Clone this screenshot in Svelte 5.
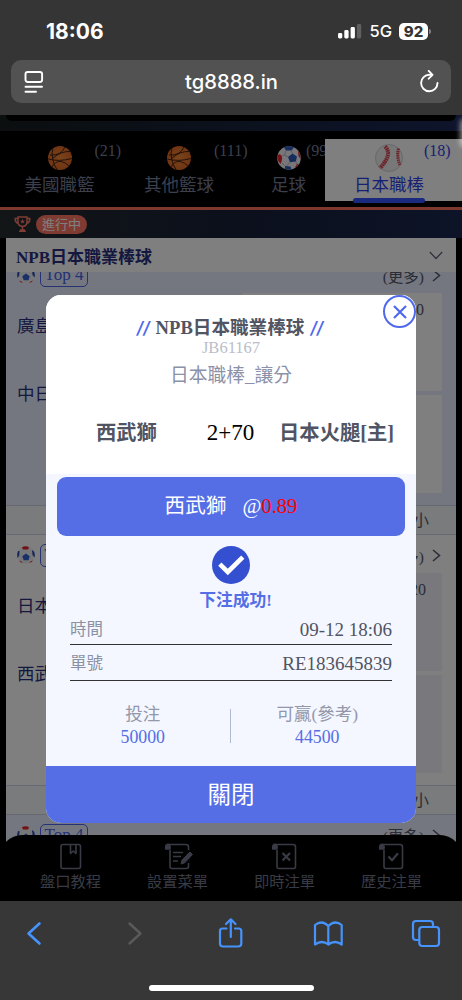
<script>
	let tabs = [
		{name: '美國職籃', count: 21, icon: 'basketball'},
		{name: '其他籃球', count: 111, icon: 'basketball'},
		{name: '足球', count: 99, icon: 'soccer'},
		{name: '日本職棒', count: 18, icon: 'baseball', active: true},
	];
	let matches = [
		{home: '廣島鯉魚', away: '中日龍', odds: '20'},
		{home: '日本火腿', away: '西武獅', odds: '20', plain: true},
		{home: '', away: '', odds: ''},
	];
	let menu = [
		{name: '盤口教程', icon: 'book'},
		{name: '設置菜單', icon: 'edit'},
		{name: '即時注單', icon: 'cross'},
		{name: '歷史注單', icon: 'check'},
	];
	let bet = [
		{label: '時間', value: '09-12 18:06'},
		{label: '單號', value: 'RE183645839'},
	];
</script>

{#snippet soccer()}
	<svg class="ball" viewBox="0 0 24 24">
		<circle cx="12" cy="12" r="11.8" fill="#f0f0f4"/>
		<path d="M7 1.5 Q12 -1 17 1.5 L14.5 4.5 L9 4.5Z" fill="#2e5bbd"/>
		<path d="M0.5 9 Q4 7 5 11 Q5.5 15 3.5 18 Q-.5 14 .5 9Z" fill="#e8202c"/>
		<path d="M11 11 L15.5 7.5 L20 10.5 L18.8 15.5 L13 16.3Z" fill="#2e5bbd"/>
		<path d="M8 20 L13.5 20.5 L14.5 23.5 Q11 24.5 8 22.8Z" fill="#2e5bbd"/>
		<path d="M21 4.5 Q24 9 23.5 13 L21.5 10Z M20 18 L21.8 18 Q20 21 17.5 22.3Z" fill="#e8202c"/>
		<path d="M9 4.5 L7.5 9 L11 11 M7.5 9 L5 10 M14.5 4.5 L15.5 7.5 M13 16.3 L9.5 20 M5 17 L8 20 M18.8 15.5 L20 18" stroke="#a0a0aa" stroke-width=".7" fill="none"/>
	</svg>
{/snippet}

{#snippet smallBall()}
	<svg class="small-ball" viewBox="0 0 18 18">
		<circle cx="9" cy="9" r="8.8" fill="#eceef2"/>
		<path d="M5 1.2 Q8 -.5 12 1 L11 3.5 L6 3.5Z" fill="#e8202c"/>
		<path d="M1 5 L2.5 5 L2.3 9.5 L.5 12 Q-.3 8 1 5Z M17 5.5 L15 4 L15.5 9 L17.5 11.5 Q18.3 8 17 5.5Z" fill="#2e4dae"/>
		<path d="M9 7.5 L12.7 10.3 L11.5 14.3 L6.7 14.3 L5.2 10.3Z" fill="#3460d2"/>
		<path d="M2 14.5 Q3.5 16.5 5.7 17 L4.5 15.5Z M16 14.5 Q14.5 16.5 12.3 17 L13.5 15.5Z" fill="#e8202c"/>
	</svg>
{/snippet}

<div class="phone">
	<header class="browser-top">
		<div class="status">
			<span class="clock">18:06</span>
			<div class="status-right">
				<svg width="24" height="16" viewBox="0 0 24 16">
					<rect x="0" y="10" width="4.3" height="5.5" rx="1.4" fill="#fff"/>
					<rect x="6.3" y="7" width="4.3" height="8.5" rx="1.4" fill="#fff"/>
					<rect x="12.6" y="4" width="4.3" height="11.5" rx="1.4" fill="#fff"/>
					<rect x="18.9" y="1" width="4.3" height="14.5" rx="1.4" fill="#606060"/>
				</svg>
				<span class="network">5G</span>
				<span class="battery">92</span>
			</div>
		</div>
		<div class="address">
			<svg width="20" height="24" viewBox="0 0 20 24" fill="none" stroke="#fff" stroke-width="1.9" stroke-linecap="round">
				<rect x="1.5" y="2" width="16.6" height="10" rx="2.2"/>
				<path d="M1.5 16.8H18M1.5 21.8H12"/>
			</svg>
			<span>tg8888.in</span>
			<svg width="20" height="24" viewBox="0 0 20 24" fill="none" stroke="#fff" stroke-width="1.9" stroke-linecap="round" stroke-linejoin="round">
				<path d="M12.5 4.8 H10.5 A8.2 8.2 0 1 0 18.5 13"/>
				<path d="M9.7 .9 L13.5 4.8 L9.7 8.7"/>
			</svg>
		</div>
	</header>

	<main class="web">
		<div class="banner"><div class="banner-card"></div></div>
		<nav class="tabs">
			{#each tabs as tab}
				<div class="tab" class:active={tab.active}>
					<div class="tab-inner">
						{#if tab.icon == 'basketball'}
							<svg class="ball" viewBox="0 0 24 24">
								<defs><radialGradient id="orange"><stop offset="0" stop-color="#f48a38"/><stop offset="1" stop-color="#e06a24"/></radialGradient></defs>
								<circle cx="12" cy="12" r="12" fill="url(#orange)"/>
								<path d="M.3 13 Q11 16 23.8 12.5 M5 2.5 Q3.5 6 4.5 12 Q5.5 19 9 23.5 M2 9 Q13 10 17 1 M4.5 12.5 Q13 5 22 5.5 M4 21 Q7 15 13 15.5 Q18 16.5 21 20" fill="none" stroke="#432014" stroke-width="1"/>
							</svg>
						{:else if tab.icon == 'soccer'}
							{@render soccer()}
						{:else}
							<svg class="baseball" viewBox="0 0 28 28">
								<circle cx="14" cy="14" r="14" fill="#f0f0f0"/>
								<circle cx="14" cy="14" r="13.5" fill="none" stroke="#d4d4d8"/>
								<path d="M10 2.5 Q18 10 5 24" fill="none" stroke="#d64550" stroke-width="4" stroke-dasharray="1.7 .5"/>
								<path d="M23.5 4.5 Q21.5 13 25 21" fill="none" stroke="#d64550" stroke-width="3" stroke-dasharray="1.6 .6"/>
							</svg>
						{/if}
						<span class="tab-name">{tab.name}</span>
						<span class="tab-count">({tab.count})</span>
					</div>
				</div>
			{/each}
		</nav>
		<div class="live">
			<svg width="17" height="17" viewBox="0 0 17 17">
				<path d="M4 1H13V6Q13 10 8.5 10.5Q4 10 4 6Z M4 2.5H1.2Q1 6.5 4.5 7.5 M13 2.5H15.8Q16 6.5 12.5 7.5 M8.5 10V14" fill="none" stroke="#ff7a6a" stroke-width="1.5"/>
				<path d="M4.8 16L6.3 13.2H10.7L12.2 16Z" fill="#ff7a6a"/>
				<path d="M8.5 3L9.2 4.7H11L9.6 5.8L10.1 7.6L8.5 6.5L6.9 7.6L7.4 5.8L6 4.7H7.8Z" fill="#ff7a6a"/>
			</svg>
			<span class="pill">進行中</span>
		</div>
		<section class="league">
			<div class="league-head">
				<b>NPB日本職業棒球</b>
				<svg width="14" height="9" viewBox="0 0 14 9"><path d="M.8 1L7 7.5L13.2 1" fill="none" stroke="#60647a" stroke-width="1.3"/></svg>
			</div>
			<div class="list">
				<div class="list-inner">
					{#each matches as match}
						<article class="match" class:plain={match.plain}>
							<div class="match-head">
								{@render smallBall()}
								<span class="top">Top 4</span>
								<span class="more">(更多)</span>
								<svg width="9" height="13" viewBox="0 0 9 13"><path d="M1 1L7.5 6.5L1 12" fill="none" stroke="#55586a" stroke-width="1.5"/></svg>
							</div>
							<div class="match-body">
								<div class="teams">
									<span>{match.home}</span>
									<span>{match.away}</span>
								</div>
								<div class="cells">
									<div class="cell">{match.odds}</div>
									<div class="cell"></div>
								</div>
							</div>
						</article>
						<div class="size">小</div>
					{/each}
				</div>
			</div>
		</section>
		<nav class="menu">
			{#each menu as item}
				<div class="menu-item">
					<svg width="30" height="27" viewBox="0 0 30 27" fill="none" stroke="currentColor" stroke-width="1.6" stroke-linejoin="round">
						{#if item.icon == 'book'}
							<rect x="5" y="1.5" width="19.5" height="24" rx="2"/>
							<path d="M14.5 1.5V10.5L17.3 8L20 10.5V1.5"/>
						{:else}
							<path d="M7 7V23.5Q7 25.5 9 25.5H23.5Q25.5 25.5 25.5 23.5V4Q25.5 1.5 23 1.5H5Q7 2 7 5"/>
							<path d="M7 6H2.7Q2.3 1.2 5 1.2Q7 1.5 7 6Z" fill="currentColor"/>
							{#if item.icon == 'edit'}
								<path d="M25.5 7V20" stroke="#000" stroke-width="2.2"/>
								<path d="M10 9.5H20M10 13.5H18M10 18H15"/>
								<path d="M18 21L19 17L27 9L29.5 11.5L21.5 20Z" fill="currentColor" stroke-width="1"/>
							{:else if item.icon == 'cross'}
								<path d="M12.5 10L20 17.5M20 10L12.5 17.5" stroke-width="2.2"/>
							{:else}
								<path d="M11.5 13.5L15 17.3L21 10.2" stroke-width="2.2"/>
							{/if}
						{/if}
					</svg>
					<span>{item.name}</span>
				</div>
			{/each}
		</nav>

		<div class="overlay">
			<div class="glow"></div>
			<div class="modal">
				<button class="close" aria-label="close">
					<svg width="16" height="16" viewBox="0 0 16 16"><path d="M2 2L14 14M14 2L2 14" stroke="#4f69ec" stroke-width="2.2"/></svg>
				</button>
				<div class="modal-head">
					<h2><i>//</i>NPB日本職業棒球<i>//</i></h2>
					<p class="code">JB61167</p>
					<p class="kind">日本職棒_讓分</p>
					<div class="versus">
						<b>西武獅</b>
						<span>2+70</span>
						<b>日本火腿[主]</b>
					</div>
				</div>
				<div class="modal-body">
					<div class="pick">西武獅<span class="at">@<em>0.89</em></span></div>
					<svg class="tick" width="38" height="38" viewBox="0 0 38 38">
						<circle cx="19" cy="19" r="19" fill="#344fd0"/>
						<path d="M7.8 18.2L15.8 26L30.8 11.2" fill="none" stroke="#fff" stroke-width="4.6"/>
					</svg>
					<p class="success">下注成功!</p>
					{#each bet as row}
						<div class="row">
							<span>{row.label}</span>
							<span class="value">{row.value}</span>
						</div>
					{/each}
					<div class="amounts">
						<div><span>投注</span><strong>50000</strong></div>
						<div><span>可贏(參考)</span><strong>44500</strong></div>
					</div>
				</div>
				<button class="done">關閉</button>
			</div>
		</div>
	</main>

	<footer class="browser-bottom">
		<svg width="462" height="66" viewBox="0 901 462 66" fill="none" stroke="#4593fb" stroke-width="2.2" stroke-linecap="round" stroke-linejoin="round">
			<path d="M39.5 923.5L28.5 933.5L39.5 943.5" stroke-width="2.6"/>
			<path d="M129.5 923.5L140.5 933.5L129.5 943.5" stroke="#5a5a5a" stroke-width="2.4"/>
			<path d="M226.5 928.5H222.5Q220 928.5 220 931V943.5Q220 946.5 223 946.5H238Q241.3 946.5 241.3 943.5V931Q241.3 928.5 238.5 928.5H235 M230.8 937V920 M226 924L230.8 919.3L235.5 924"/>
			<path d="M328.3 926Q322 919.5 315 925V944.5Q322 939.5 328.3 944.5Q335 939.5 341.7 944.5V925Q335 919.5 328.3 926V944"/>
			<path d="M418.5 940H416Q413 940 413 937V924Q413 921 416 921H430Q433 921 433 924V926"/>
			<rect x="419.3" y="927" width="19.7" height="19" rx="3"/>
		</svg>
		<div class="home"></div>
	</footer>
</div>

<style>
	:global(body) {
		background:#000;
	}
	.phone {
		width:462px;
		height:1000px;
		overflow:hidden;
		display:flex;
		flex-direction:column;
		background:#000;
		font-family:"Liberation Serif","Noto Sans CJK TC",serif;
	}
	h2,p {
		margin:0;
	}
	svg {
		display:block;
		flex:none;
	}
	/* Safari */
	.browser-top {
		height:115px;
		background:#353535;
		color:white;
		font-family:Inter,sans-serif;
	}
	.status {
		height:60px;
		box-sizing:border-box;
		padding:2px 31px 0 46px;
		display:flex;
		justify-content:space-between;
		align-items:center;
	}
	.clock {
		font-size:21px;
		font-weight:700;
	}
	.status-right {
		display:flex;
		align-items:center;
		gap:7px;
	}
	.network {
		font-size:16.5px;
		font-weight:500;
	}
	.battery {
		position:relative;
		width:29px;
		height:17px;
		margin-right:3px;
		border-radius:5px;
		background:white;
		color:#353535;
		font-size:15px;
		line-height:17px;
		font-weight:800;
		text-align:center;
	}
	.battery::after {
		content:"";
		position:absolute;
		right:-3px;
		top:6px;
		width:2px;
		height:5px;
		border-radius:0 2px 2px 0;
		background:#808080;
	}
	.address {
		height:43px;
		margin:0 11px;
		padding:0 12px 0 13px;
		box-sizing:border-box;
		border-radius:10px;
		background:#525252;
		display:flex;
		justify-content:space-between;
		align-items:center;
		font-size:20.2px;
		font-weight:500;
	}
	/* Page */
	.web {
		position:relative;
		height:786px;
		overflow:hidden;
	}
	.banner {
		height:16px;
		background:linear-gradient(90deg,#161e20,#182440 60%,#1c2a58);
	}
	.banner-card {
		height:6px;
		margin:0 6px;
		border-radius:0 0 18px 18px;
		background:#000;
	}
	.tabs {
		height:76px;
		display:flex;
		background:#000;
		border-bottom:3px solid #ff705c;
	}
	.tab {
		flex:0 0 120px;
		display:flex;
		justify-content:center;
		color:#787e98;
	}
	.tab:first-child {
		flex-basis:119px;
	}
	.tab:nth-child(3) {
		flex-basis:99px;
		margin-right:-13px;
	}
	.tab-inner {
		position:relative;
		height:100%;
		padding-top:15px;
		box-sizing:border-box;
		display:flex;
		flex-direction:column;
		align-items:center;
	}
	.ball {
		width:24px;
		height:24px;
	}
	.tab-name {
		margin-top:2px;
		font-size:17.5px;
		line-height:26px;
		white-space:nowrap;
	}
	.tab-count {
		position:absolute;
		left:100%;
		top:11px;
		font-size:16px;
		line-height:18px;
	}
	.tab.active {
		position:relative;
		flex:0 0 137px;
		height:62px;
		margin-top:8px;
		background:white;
		color:#303ee8;
		box-sizing:border-box;
		padding-right:9px;
	}
	.tab.active .tab-inner {
		padding-top:5px;
	}
	.tab.active .tab-inner::after {
		content:"";
		position:absolute;
		left:-1px;
		right:-1px;
		bottom:-2px;
		height:5px;
		border-radius:3px;
		background:#3454ff;
	}
	.tab.active .tab-count {
		top:3px;
	}
	.tab.active .tab-name {
		margin-top:0;
	}
	.baseball {
		width:28px;
		height:28px;
	}
	.live {
		height:28px;
		padding:0 14px;
		display:flex;
		align-items:center;
		gap:5px;
		background:linear-gradient(90deg,#242c2e,#182038 50%,#1a2850);
	}
	.pill {
		width:51px;
		height:19px;
		border-radius:10px;
		background:#ff7465;
		color:white;
		font-size:13px;
		line-height:19px;
		text-align:center;
	}
	.league {
		margin:0 6px;
	}
	.league-head {
		height:34px;
		padding:0 13px 0 10px;
		display:flex;
		justify-content:space-between;
		align-items:center;
		background:white;
		color:#28307c;
		font-size:17px;
	}
	.list {
		height:592px;
		overflow:hidden;
	}
	.list-inner {
		margin-top:-17px;
	}
	.match {
		height:250px;
		background:#e8efff;
		border-bottom:1px solid #c8d2e8;
	}
	.match.plain {
		background:white;
	}
	.match-head {
		height:38px;
		padding:2px 15px 0 11px;
		box-sizing:border-box;
		display:flex;
		align-items:center;
	}
	.small-ball {
		width:18px;
		height:18px;
	}
	.top {
		margin-left:5px;
		width:46px;
		height:21px;
		border:1px solid #4a64e8;
		border-radius:5px;
		color:#4a64e8;
		font-size:17px;
		line-height:20px;
		text-align:center;
	}
	.more {
		margin-left:auto;
		margin-right:8px;
		color:#55586a;
		font-size:15.5px;
	}
	.match-body {
		display:flex;
		justify-content:space-between;
		padding:0 14px 0 11px;
	}
	.teams {
		display:flex;
		flex-direction:column;
		color:#28307c;
		font-size:17.5px;
		padding-top:20px;
	}
	.teams span {
		height:68px;
		line-height:26px;
	}
	.cells {
		width:200px;
		display:flex;
		flex-direction:column;
		gap:4px;
	}
	.cell {
		height:98px;
		padding:8px 18px;
		box-sizing:border-box;
		background:white;
		color:#55586a;
		font-size:16px;
		text-align:right;
	}
	.plain .cell {
		padding-right:16px;
		background:#f2f3fb;
	}
	.size {
		height:28px;
		padding-right:27px;
		background:#f4f6fb;
		border-bottom:1px solid #c8d2e8;
		color:#55586a;
		font-size:16px;
		line-height:29px;
		text-align:right;
	}
	.menu {
		position:absolute;
		left:0;
		right:0;
		bottom:0;
		height:66px;
		padding:8px 17px 0;
		box-sizing:border-box;
		border-radius:22px 22px 0 0;
		background:#000;
		display:flex;
	}
	.menu-item {
		flex:1;
		display:flex;
		flex-direction:column;
		align-items:center;
		color:#71768a;
		font-size:15.3px;
		line-height:24px;
	}
	.overlay {
		position:absolute;
		inset:0;
		background:rgba(0,0,0,.5);
		display:flex;
		justify-content:center;
		align-items:flex-start;
		padding-top:180px;
	}
	.glow {
		position:absolute;
		right:-4px;
		top:6px;
		width:4px;
		height:24px;
		border-radius:4px;
		background:white;
		box-shadow:0 0 5px 2px rgba(255,255,255,.5);
	}
	/* Bet slip */
	.modal {
		position:relative;
		width:370px;
		height:528px;
		border-radius:15px;
		background:#f4f7ff;
		display:flex;
		flex-direction:column;
	}
	.close {
		position:absolute;
		right:0;
		top:0;
		width:33px;
		height:33px;
		padding:0;
		border:2px solid #4f69ec;
		border-radius:50%;
		background:white;
		display:flex;
		justify-content:center;
		align-items:center;
	}
	.modal-head {
		height:179px;
		padding-top:20px;
		box-sizing:border-box;
		border-radius:15px 15px 0 0;
		background:white;
		text-align:center;
	}
	h2 {
		display:flex;
		justify-content:center;
		gap:6px;
		padding-right:2px;
		color:#505463;
		font-size:18.6px;
		line-height:26px;
	}
	h2 i {
		color:#4f69ec;
		font-family:Inter,sans-serif;
		font-size:17px;
		font-weight:600;
	}
	.code {
		color:#babdca;
		font-size:16.5px;
		line-height:14px;
	}
	.kind {
		margin-top:8px;
		color:#8b91a9;
		font-size:18.8px;
		line-height:25px;
	}
	.versus {
		margin-top:30px;
		padding:0 22px 0 50px;
		display:flex;
		align-items:center;
		line-height:30px;
		font-size:20.3px;
		color:#505463;
	}
	.versus span {
		margin-left:50px;
		margin-right:auto;
		color:black;
		font-size:23px;
	}
	.modal-body {
		flex:1;
		padding:3px 11px 0;
		display:flex;
		flex-direction:column;
		align-items:center;
	}
	.pick {
		width:100%;
		height:59px;
		border-radius:9px;
		background:#556ee6;
		color:white;
		font-size:20.6px;
		line-height:59px;
		display:flex;
		justify-content:center;
	}
	.at {
		margin-left:16px;
	}
	.at em {
		color:red;
		font-style:normal;
	}
	.tick {
		margin-top:10px;
	}
	.success {
		margin:5px 0 0 9px;
		color:#556ee6;
		font-size:16.8px;
		font-weight:bold;
		line-height:24px;
	}
	.row {
		width:322px;
		height:36px;
		padding-top:2px;
		box-sizing:border-box;
		border-bottom:1.5px solid #333;
		display:flex;
		justify-content:space-between;
		align-items:center;
		color:#8b91a4;
		font-size:16.5px;
		line-height:32px;
	}
	.success + .row {
		height:32px;
	}
	.value {
		color:#505463;
		font-size:19px;
	}
	.amounts {
		width:100%;
		margin-top:22px;
		padding-right:2px;
		box-sizing:border-box;
		display:flex;
	}
	.amounts div {
		flex:1;
		display:flex;
		flex-direction:column;
		align-items:center;
		color:#9297aa;
		font-size:17.5px;
		line-height:23px;
	}
	.amounts div:first-child {
		padding-right:3px;
	}
	.amounts div + div {
		position:relative;
	}
	.amounts div + div::before {
		content:"";
		position:absolute;
		left:-2px;
		top:6px;
		width:1px;
		height:34px;
		background:#b4bad2;
	}
	.amounts strong {
		color:#556ee6;
		font-size:17.8px;
		font-weight:normal;
	}
	.done {
		height:57px;
		padding:0;
		border:0;
		border-radius:0 0 15px 15px;
		background:#556ee6;
		color:white;
		font:23.5px/56px "Liberation Serif","Noto Sans CJK TC",serif;
	}
	.browser-bottom {
		height:99px;
		background:#373737;
	}
	.home {
		width:165px;
		height:6px;
		margin:18px auto 0;
		border-radius:3px;
		background:white;
	}
</style>
